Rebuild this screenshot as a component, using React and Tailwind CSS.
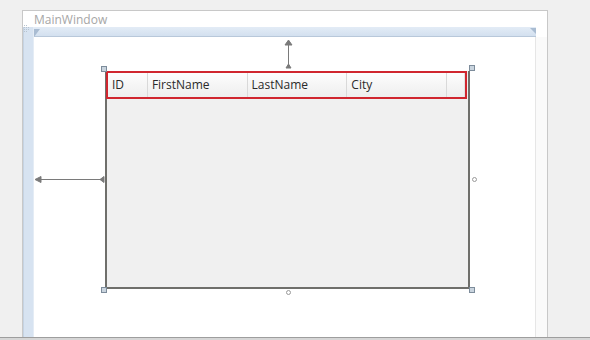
import React from 'react';

const columns = [
  { name: 'ID', width: 'w-[40px]' },
  { name: 'FirstName', width: 'w-[100px]' },
  { name: 'LastName', width: 'w-[100px]' },
  { name: 'City', width: 'w-[100px]' },
];

function Adorners() {
  // design-surface overlay: resize handles and margin arrows
  return (
    <svg className="pointer-events-none absolute inset-0" width="590" height="340">
      <g stroke="#7a7a7a" strokeWidth="1" fill="#7a7a7a">
        <line x1="288.5" y1="42" x2="288.5" y2="67" />
        <polygon points="285,45 288.5,40 292,45" />
        <polygon points="286,68 288.5,64 291,68" />
        <line x1="38" y1="179.5" x2="102" y2="179.5" />
        <polygon points="35,179.5 41,176.5 41,182.5" />
        <polygon points="100,179.5 104,176.5 104,182.5" />
      </g>
      <g fill="#c9d4de" stroke="#7d8c9b" strokeWidth="1">
        <rect x="101.5" y="66.5" width="5" height="5" />
        <rect x="469.5" y="65.5" width="5" height="5" />
        <rect x="101.5" y="287.5" width="5" height="5" />
        <rect x="469.5" y="287.5" width="5" height="5" />
      </g>
      <g fill="#ffffff" stroke="#9a9a9a" strokeWidth="1">
        <circle cx="474.5" cy="179.5" r="2" />
        <circle cx="288.5" cy="292.5" r="2" />
      </g>
      <g fill="#b7c3cf">
        <rect x="24" y="25" width="1" height="1" />
        <rect x="26" y="25" width="1" height="1" />
        <rect x="24" y="27" width="1" height="1" />
        <rect x="26" y="27" width="1" height="1" />
        <rect x="28" y="27" width="1" height="1" />
        <rect x="24" y="29" width="1" height="1" />
        <rect x="26" y="29" width="1" height="1" />
        <rect x="28" y="29" width="1" height="1" />
        <rect x="24" y="31" width="1" height="1" />
        <rect x="26" y="31" width="1" height="1" />
      </g>
      <polygon points="34,37 34,29 40,29" fill="#a9bcd2" />
      <polygon points="530,28 536,28 536,34" fill="#a9bcd2" />
    </svg>
  );
}

export default function App() {
  return (
    <div
      className="relative flex h-[340px] w-[590px] flex-col overflow-hidden bg-[#f0f0f0]"
      style={{ fontFamily: '"Open Sans", "Noto Sans", sans-serif' }}
    >
      <div className="h-[337px] pl-[22px] pt-[10px]">
        <div className="flex h-full w-[526px] flex-col border border-b-0 border-[#c8c8c8] bg-white">
          <div className="h-[16px] pl-[11px] pt-[2px] text-[12px] leading-[14px] text-[#a6a6a6]">MainWindow</div>

          <div className="flex flex-1">
            <div className="w-[11px] border-x border-l-[#c5d3e3] border-r-[#e4ecf5] bg-[#d7e3f1]" />
            <div className="flex flex-1 flex-col">
              <div className="mr-[11px] h-[10px] border-b border-[#b8c8da] bg-gradient-to-b from-[#e3ecf6] to-[#d3e0ef]" />
              <div className="flex flex-1">
                <div className="flex-1 pl-[71px] pt-[34px]">
                  <div className="flex h-[218px] w-[365px] flex-col border-2 border-t-0 border-[#6f6f6b] bg-[#f0f0f0]">
                    <div className="-ml-[1px] flex h-[28px] w-[361px] border-2 border-[#d0262f] bg-gradient-to-b from-[#fdfdfd] to-[#eeeeee] text-[12px] text-[#2a2a2a]">
                      {columns.map((col) => (
                        <div
                          key={col.name}
                          className={`${col.width} flex items-center border-r border-[#d9d9d9] pl-[4px]`}
                        >
                          {col.name}
                        </div>
                      ))}
                      <div className="w-[18px] border-r border-[#e2e2e2]" />
                    </div>
                  </div>
                </div>
                <div className="w-[12px] border-l border-[#e6e6e6] bg-[#fafafa]" />
              </div>
            </div>
          </div>
        </div>
      </div>
      <div className="h-[3px] border-t border-[#9e9e9e] bg-[#d6d6d6]" />
      <Adorners />
    </div>
  );
}
